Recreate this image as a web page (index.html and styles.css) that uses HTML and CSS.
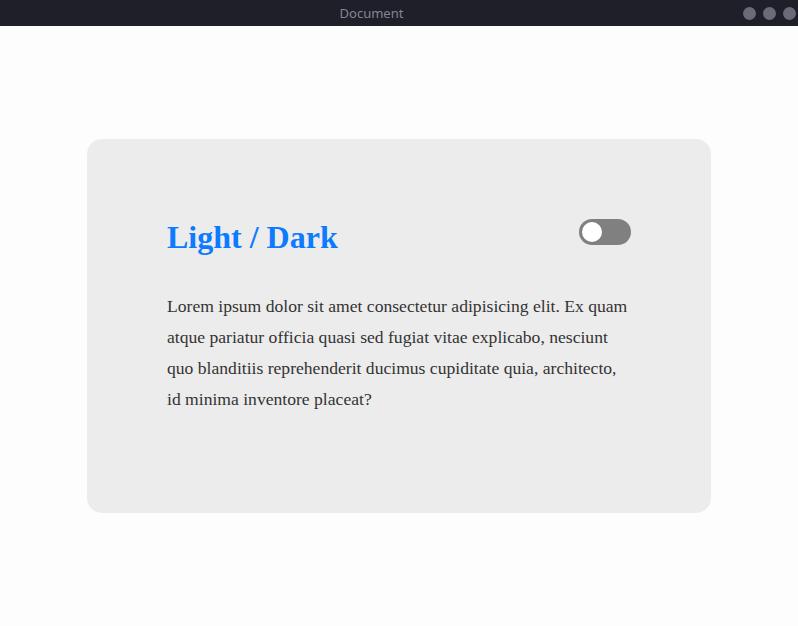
FILE: index.html
```html
<!DOCTYPE html>
<html lang="en">
<head>
<meta charset="utf-8">
<title>Document</title>
<link rel="stylesheet" href="styles.css">
</head>
<body>
<div class="titlebar">
  <div class="titlebar-title">Document</div>
  <div class="titlebar-controls">
    <span class="dot"></span><span class="dot"></span><span class="dot"></span>
  </div>
</div>
<main class="viewport">
  <section class="card">
    <header class="card-header">
      <h1 class="card-title">Light / Dark</h1>
      <label class="toggle"><span class="knob"></span></label>
    </header>
    <p class="card-text">Lorem ipsum dolor sit amet consectetur adipisicing elit. Ex quam atque pariatur officia quasi sed fugiat vitae explicabo, nesciunt quo blanditiis reprehenderit ducimus cupiditate quia, architecto, id minima inventore placeat?</p>
  </section>
</main>
</body>
</html>
```
FILE: styles.css
```css
html, body {
  margin: 0;
  padding: 0;
  height: 100%;
}
body {
  background: #fdfdfd;
  display: flex;
  flex-direction: column;
  font-family: "Liberation Serif", serif;
}
.titlebar {
  height: 26px;
  flex: none;
  background: #1f1f29;
  display: flex;
  align-items: center;
}
.titlebar-title {
  flex: 1;
  text-align: center;
  font-family: "Noto Sans", sans-serif;
  font-size: 13px;
  line-height: 24px;
  color: #858591;
}
.titlebar-controls {
  display: flex;
  gap: 7px;
  padding-right: 2px;
}
.dot {
  width: 13px;
  height: 13px;
  border-radius: 50%;
  background: #6a6a78;
}
.viewport {
  flex: 1;
  display: flex;
  align-items: center;
  justify-content: center;
}
.card {
  width: 624px;
  height: 374px;
  box-sizing: border-box;
  padding: 80px;
  background: #ececec;
  border-radius: 15px;
  display: flex;
  flex-direction: column;
}
.card-header {
  display: flex;
  justify-content: space-between;
  align-items: flex-start;
  margin-bottom: 17px;
}
.card-title {
  margin: 0;
  font-size: 32px;
  font-weight: bold;
  color: #0c7bff;
}
.toggle {
  width: 52px;
  height: 26px;
  border-radius: 13px;
  background: #808080;
  display: flex;
  align-items: center;
  padding: 0 3px;
  box-sizing: border-box;
}
.knob {
  width: 20px;
  height: 20px;
  border-radius: 50%;
  background: #ffffff;
}
.card-text {
  margin: 1em 0;
  font-size: 17.6px;
  line-height: 31px;
  color: #333333;
}
```
